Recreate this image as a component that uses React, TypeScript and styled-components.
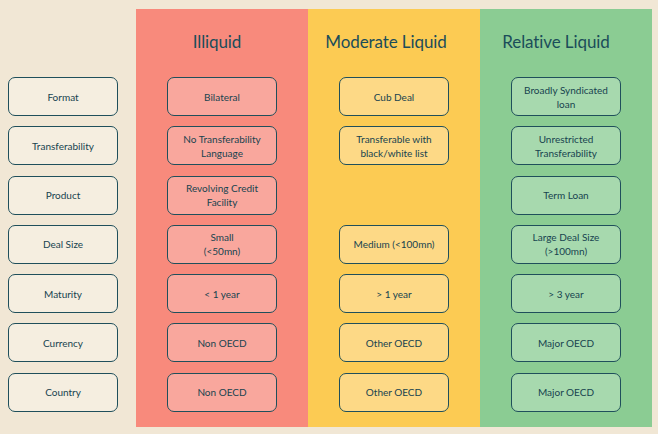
import styled, { createGlobalStyle } from 'styled-components';

const GlobalStyle = createGlobalStyle`
  html, body {
    margin: 0;
    padding: 0;
    background: #f1e7d5;
  }
  body {
    font-family: Lato, "Open Sans", sans-serif;
    color: #1c4c58;
  }
`

type Tone = 'label' | 'red' | 'yellow' | 'green'

const bandColors: Record<Tone, string> = {
  label: 'transparent',
  red: '#f88a7c',
  yellow: '#fccb53',
  green: '#8bcc93',
}

const cellColors: Record<Tone, string> = {
  label: '#f5eee0',
  red: '#f9a79d',
  yellow: '#fdd986',
  green: '#a7d9ae',
}

const Page = styled.div`
  display: grid;
  grid-template-columns: 136px repeat(3, 172px);
  width: 658px;
  height: 434px;
  padding-top: 9px;
  box-sizing: border-box;
`

const Band = styled.div<{ $tone: Tone }>`
  display: flex;
  flex-direction: column;
  align-items: ${p => (p.$tone === 'label' ? 'flex-start' : 'center')};
  height: 418px;
  background: ${p => bandColors[p.$tone]};
  padding-left: ${p => (p.$tone === 'label' ? '8px' : '0')};
  box-sizing: border-box;
`

// titles sit a little left of the band centre in the original slide
const Heading = styled.div<{ $shift?: number }>`
  height: 68px;
  width: 100%;
  display: flex;
  align-items: center;
  justify-content: center;
  padding-bottom: 4px;
  padding-right: ${p => (p.$shift || 0) * 2}px;
  box-sizing: border-box;
  font-size: 17px;
  color: #1b4d5a;
  letter-spacing: -0.1px;
`

const Cells = styled.div`
  display: grid;
  grid-template-rows: repeat(7, 39px);
  row-gap: 10.3px;
`

const Cell = styled.div<{ $tone: Tone }>`
  width: 110px;
  height: 39px;
  box-sizing: border-box;
  border: 1.3px solid #1f4f5b;
  border-radius: 7px;
  background: ${p => cellColors[p.$tone]};
  display: flex;
  align-items: center;
  justify-content: center;
  text-align: center;
  font-size: 10px;
  line-height: 14px;
  padding: 0 5px;
  color: #17434f;
`

const Slot = styled.div`
  width: 110px;
  height: 39px;
`

const labels = ['Format', 'Transferability', 'Product', 'Deal Size', 'Maturity', 'Currency', 'Country']

const columns: { title: string; tone: Tone; shift: number; items: (string | null)[] }[] = [
  {
    title: 'Illiquid',
    tone: 'red',
    shift: 5,
    items: [
      'Bilateral',
      'No Transferability Language',
      'Revolving Credit Facility',
      'Small\n(<50mn)',
      '< 1 year',
      'Non OECD',
      'Non OECD',
    ],
  },
  {
    title: 'Moderate Liquid',
    tone: 'yellow',
    shift: 8,
    items: [
      'Cub Deal',
      'Transferable with black/white list',
      null,
      'Medium (<100mn)',
      '> 1 year',
      'Other OECD',
      'Other OECD',
    ],
  },
  {
    title: 'Relative Liquid',
    tone: 'green',
    shift: 10,
    items: [
      'Broadly Syndicated loan',
      'Unrestricted Transferability',
      'Term Loan',
      'Large Deal Size\n(>100mn)',
      '> 3 year',
      'Major OECD',
      'Major OECD',
    ],
  },
]

const CellText = ({ text }: { text: string }) => (
  <span>
    {text.split('\n').map((line, i) => (
      <span key={i}>
        {i > 0 && <br />}
        {line}
      </span>
    ))}
  </span>
)

const App = () => {
  return (
    <>
      <GlobalStyle />
      <Page>
        <Band $tone="label">
          <Heading />
          <Cells>
            {labels.map(l => (
              <Cell key={l} $tone="label">{l}</Cell>
            ))}
          </Cells>
        </Band>
        {columns.map(col => (
          <Band key={col.title} $tone={col.tone}>
            <Heading $shift={col.shift}>{col.title}</Heading>
            <Cells>
              {col.items.map((item, i) =>
                item ? (
                  <Cell key={i} $tone={col.tone}>
                    <CellText text={item} />
                  </Cell>
                ) : (
                  <Slot key={i} />
                )
              )}
            </Cells>
          </Band>
        ))}
      </Page>
    </>
  )
}

export default App
